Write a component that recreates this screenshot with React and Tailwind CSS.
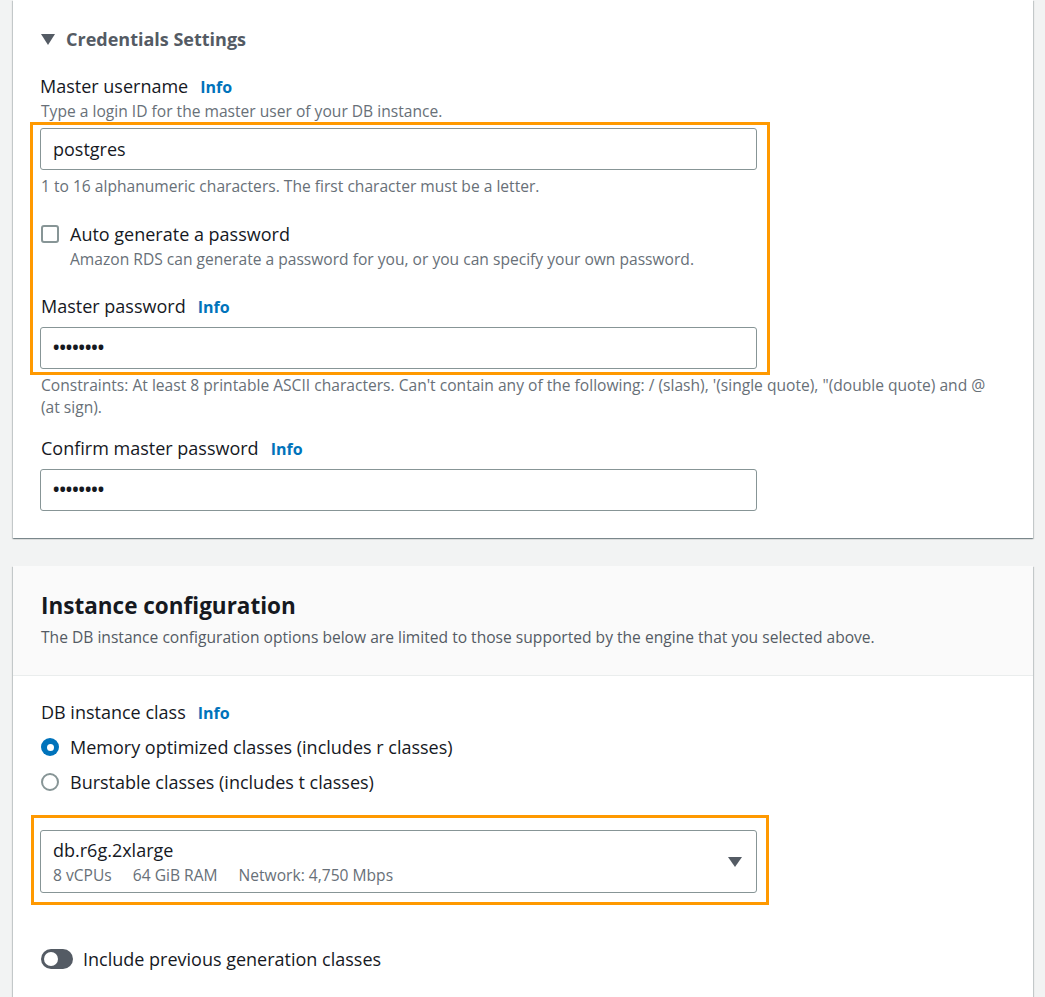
import React from "react";

const font = { fontFamily: '"Open Sans", "Noto Sans", Arial, sans-serif' };

function Info() {
  return <span className="ml-[12px] text-[16px] font-bold text-[#0073bb]">Info</span>;
}

function Label({ children }) {
  return (
    <div className="flex items-baseline h-[24px] leading-[24px] text-[18px] text-[#16191f]">
      <span>{children}</span>
      <Info />
    </div>
  );
}

function Input({ children, className = "" }) {
  return (
    <div
      className={
        "w-[717px] h-[42px] border border-[#879596] rounded-[3px] bg-white flex items-center px-[12px] text-[18px] text-[#16191f] " +
        className
      }
    >
      {children}
    </div>
  );
}

function Dots() {
  return <span className="text-[17px] font-bold text-[#16191f]">••••••••</span>;
}

const shadow =
  "shadow-[0_1px_1px_0_rgba(0,28,36,0.3),1px_1px_1px_0_rgba(0,28,36,0.15),-1px_1px_1px_0_rgba(0,28,36,0.15)]";

export default function App() {
  return (
    <div style={font} className="w-[1045px] h-[997px] overflow-hidden bg-[#f2f3f3] pl-[13px] pr-[12px]">
      {/* Card 1 */}
      <div className={"bg-white px-[27px] pt-[25px] pb-[27px] " + shadow}>
        <div className="flex items-center h-[28px] text-[18px] font-bold text-[#545b64]">
          <svg width="14" height="11" viewBox="0 0 14 11" className="mr-[11px] ml-[1px]">
            <path d="M0 0 H14 L7 11 Z" fill="#545b64" />
          </svg>
          Credentials Settings
        </div>

        <div className="mt-[21px]">
          <Label>Master username</Label>
        </div>
        <div className="mt-[2px] h-[22px] leading-[22px] text-[15.6px] text-[#687078] pl-[1px]">
          Type a login ID for the master user of your DB instance.
        </div>

        <div className="-ml-[10px] w-[740px] border-[3px] border-[#ff9900] pl-[7px] pt-[3px] pb-[3px]">
          <Input>postgres</Input>
          <div className="mt-[5px] h-[22px] leading-[22px] text-[15.6px] text-[#687078] pl-[1px]">
            1 to 16 alphanumeric characters. The first character must be a letter.
          </div>
          <div className="mt-[25px] flex items-center h-[24px] pl-[1px]">
            <div className="w-[18px] h-[18px] border-2 border-[#879596] rounded-[3px] bg-white" />
            <span className="ml-[11px] text-[18px] text-[#16191f]">Auto generate a password</span>
          </div>
          <div className="mt-[2px] pl-[30px] h-[22px] leading-[22px] text-[15.6px] text-[#687078]">
            Amazon RDS can generate a password for you, or you can specify your own password.
          </div>
          <div className="mt-[24px] pl-[1px]">
            <Label>Master password</Label>
          </div>
          <Input className="mt-[9px]">
            <Dots />
          </Input>
        </div>

        <div className="-mt-[1px] h-[44px] leading-[22px] text-[15.6px] text-[#687078] pl-[1px] pr-[4px]">
          Constraints: At least 8 printable ASCII characters. Can't contain any of the following: / (slash), '(single
          quote), "(double quote) and @ (at sign).
        </div>

        <div className="mt-[18px] pl-[1px]">
          <Label>Confirm master password</Label>
        </div>
        <Input className="mt-[9px]">
          <Dots />
        </Input>
      </div>

      {/* Card 2 */}
      <div className={"mt-[28px] bg-white " + shadow}>
        <div className="bg-[#fafafa] border-b border-[#eaeded] px-[27px] pt-[24px] pb-[27px]">
          <div className="h-[32px] leading-[32px] text-[22.5px] font-bold text-[#16191f] pl-[1px]">
            Instance configuration
          </div>
          <div className="mt-[4px] h-[22px] leading-[22px] text-[15.6px] text-[#545b64] pl-[1px]">
            The DB instance configuration options below are limited to those supported by the engine that you selected
            above.
          </div>
        </div>

        <div className="px-[27px] pt-[24px] pb-[40px]">
          <div className="pl-[1px]">
            <Label>DB instance class</Label>
          </div>
          <div className="mt-[11px] flex items-center h-[24px] pl-[1px]">
            <div className="w-[18px] h-[18px] rounded-full bg-[#0073bb] flex items-center justify-center">
              <div className="w-[7px] h-[7px] rounded-full bg-white" />
            </div>
            <span className="ml-[11px] text-[18px] text-[#16191f]">Memory optimized classes (includes r classes)</span>
          </div>
          <div className="mt-[11px] flex items-center h-[24px] pl-[1px]">
            <div className="w-[18px] h-[18px] rounded-full border-2 border-[#879596] bg-white" />
            <span className="ml-[11px] text-[18px] text-[#16191f]">Burstable classes (includes t classes)</span>
          </div>

          <div className="mt-[21px] -ml-[9px] w-[738px] border-[3px] border-[#ff9900] pl-[6px] pt-[12px] pb-[9px]">
            <div className="w-[717px] h-[63px] border border-[#879596] rounded-[3px] bg-white flex items-center pl-[12px] pr-[14px]">
              <div className="flex-1">
                <div className="h-[24px] leading-[24px] text-[18px] text-[#16191f]">db.r6g.2xlarge</div>
                <div className="mt-[2px] h-[22px] leading-[22px] text-[15.6px] text-[#687078] flex">
                  <span>8 vCPUs</span>
                  <span className="ml-[21px]">64 GiB RAM</span>
                  <span className="ml-[21px]">Network: 4,750 Mbps</span>
                </div>
              </div>
              <svg width="14" height="10" viewBox="0 0 14 10">
                <path d="M0 0 H14 L7 10 Z" fill="#545b64" />
              </svg>
            </div>
          </div>

          <div className="mt-[42px] flex items-center h-[24px] pl-[1px]">
            <div className="w-[32px] h-[20px] rounded-full bg-[#545b64] flex items-center pl-[3px]">
              <div className="w-[14px] h-[14px] rounded-full bg-white" />
            </div>
            <span className="ml-[10px] text-[18px] text-[#16191f]">Include previous generation classes</span>
          </div>
        </div>
      </div>
    </div>
  );
}
